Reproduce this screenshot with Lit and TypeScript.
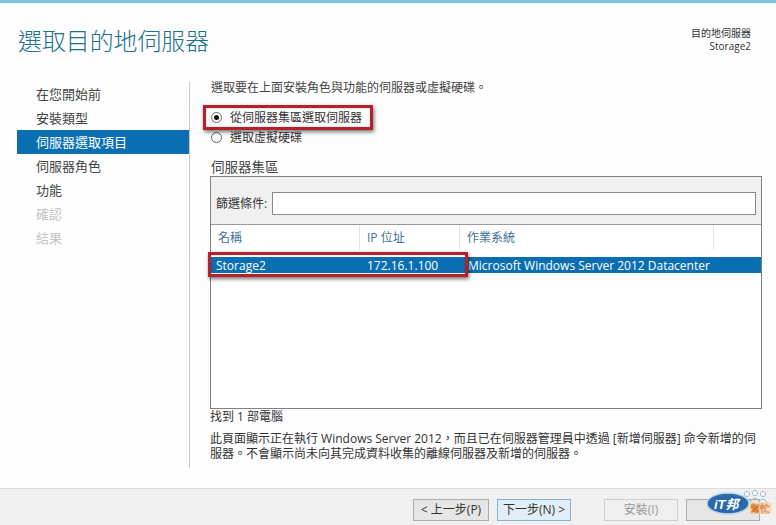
import { LitElement, html, css } from "lit";
import { customElement } from "lit/decorators.js";

@customElement("app-root")
export class AppRoot extends LitElement {
  static styles = css`
    :host {
      display: flex; flex-direction: column; position: relative; overflow: hidden;
      width: 776px; height: 525px; background: #fdfdfd; color: #333;
      font-family: "Open Sans", "Noto Sans CJK TC", sans-serif; font-size: 12px;
    }
    .topbar { height: 3px; background: #7cc5df; flex: none; }
    .header { height: 79px; flex: none; display: flex; justify-content: space-between; box-sizing: border-box; padding: 24px 25px 0 18px; }
    .title { font-size: 23.9px; line-height: 28px; color: #23708c; font-weight: 300; }
    .dest { text-align: right; font-size: 10px; line-height: 13px; color: #333; }
    .main { flex: 1; display: flex; min-height: 0; }
    .side { width: 172px; margin-left: 17px; height: 386px; flex: none; box-sizing: border-box; }
    .divider { width: 1px; height: 386px; background: #c8c8c8; flex: none; }
    .item { height: 24px; line-height: 24px; padding-left: 19px; font-size: 13px; color: #444; }
    .item.on { background: #0a6fb2; color: #fff; }
    .item.off { color: #c4c4c4; }
    .content { margin-left: 21px; width: 551px; flex: none; }
    .intro { line-height: 12px; height: 12px; color: #444; white-space: nowrap; }
    .radio { display: flex; align-items: center; height: 20px; gap: 8px; color: #333; }
    .radio.first { margin-top: 13px; }
    .dot { width: 9px; height: 9px; border: 1px solid #666; border-radius: 50%; background: #fff; display: flex; align-items: center; justify-content: center; }
    .dot.sel::after { content: ""; width: 5px; height: 5px; border-radius: 50%; background: #111; }
    .pool { margin-top: 12px; height: 16px; line-height: 16px; font-size: 13.5px; color: #444; }
    .box { margin-top: 1px; margin-left: -1px; height: 233px; border: 1px solid #808080; box-sizing: border-box; background: #fff; display: flex; flex-direction: column; }
    .filter { height: 48px; flex: none; background: #f0f0f0; border-bottom: 1px solid #9a9a9a; display: flex; align-items: flex-end; gap: 3px; padding: 0 5px 9px 5px; box-sizing: border-box; }
    .filter label { line-height: 23px; color: #333; white-space: nowrap; width: 53px; }
    .input { flex: 1; height: 23px; border: 1px solid #8a8a8a; background: #fff; box-sizing: border-box; }
    .cols { height: 25px; flex: none; display: grid; grid-template-columns: 149px 100px 254px 1fr; }
    .col { line-height: 25px; color: #3d7198; padding-left: 7px; border-right: 1px solid #e4e4e4; }
    .col:last-child { border-right: 0; }
    .row { margin-top: 7px; height: 16px; line-height: 17px; display: grid; grid-template-columns: 149px 100px 1fr; background: #0a6fb2; color: #fff; font-size: 12px; }
    .row span { padding-left: 5px; white-space: nowrap; }
    .row span:nth-child(2) { padding-left: 7px; }
    .row span:nth-child(3) { padding-left: 8px; }
    .found { margin-top: 1px; line-height: 14px; color: #333; margin-left: -1px; }
    .note { margin-top: 7px; margin-left: -1px; line-height: 15px; color: #333; white-space: nowrap; font-size: 12px; }
    .footer { height: 37px; flex: none; background: #f0f0f0; border-top: 1px solid #dcdcdc; box-sizing: border-box; display: flex; padding: 10px 16px 0 413px; }
    .btn { height: 22px; box-sizing: border-box; width: 76px; border: 1px solid #adadad; background: #e6e6e6; text-align: center; line-height: 20px; color: #333; }
    .btn.next { width: 74px; margin-left: 8px; background: #e3edf6; border-color: #7eb4da; }
    .btn.dis { width: 74px; margin-left: 33px; color: #9a9a9a; background: #efefef; border-color: #cfcfcf; }
    .btn.cancel { width: 74px; margin-left: 8px; }
    .mark { position: absolute; border: 3px solid #b5202a; box-sizing: border-box; box-shadow: 1px 2px 4px rgba(0,0,0,.55), inset 0 0 2px rgba(0,0,0,.25); }
    .mark.a { left: 203px; top: 105px; width: 170px; height: 25px; }
    .mark.b { left: 208px; top: 252px; width: 260px; height: 25px; }
    .logo { position: absolute; left: 706px; top: 488px; width: 70px; height: 34px; }
    .logo-text { font-family: "Liberation Sans", "Noto Sans CJK TC", sans-serif; font-weight: 700; font-style: italic; font-size: 13px; fill: #fff; }
    .logo-help { font-family: "Noto Sans CJK TC", sans-serif; font-weight: 700; font-size: 9.5px; fill: #fff; stroke: #d9762a; stroke-width: .6px; }
  `;

  render() {
    return html`
      <div class="topbar"></div>
      <div class="header">
        <div class="title">選取目的地伺服器</div>
        <div class="dest">目的地伺服器<br />Storage2</div>
      </div>
      <div class="main">
        <div class="side">
          <div class="item">在您開始前</div>
          <div class="item">安裝類型</div>
          <div class="item on">伺服器選取項目</div>
          <div class="item">伺服器角色</div>
          <div class="item">功能</div>
          <div class="item off">確認</div>
          <div class="item off">結果</div>
        </div>
        <div class="divider"></div>
        <div class="content">
          <div class="intro">選取要在上面安裝角色與功能的伺服器或虛擬硬碟。</div>
          <div class="radio first"><span class="dot sel"></span>從伺服器集區選取伺服器</div>
          <div class="radio"><span class="dot"></span>選取虛擬硬碟</div>
          <div class="pool">伺服器集區</div>
          <div class="box">
            <div class="filter"><label>篩選條件:</label><div class="input"></div></div>
            <div class="cols">
              <div class="col">名稱</div><div class="col">IP 位址</div><div class="col">作業系統</div><div class="col"></div>
            </div>
            <div class="row"><span>Storage2</span><span>172.16.1.100</span><span>Microsoft Windows Server 2012 Datacenter</span></div>
          </div>
          <div class="found">找到 1 部電腦</div>
          <div class="note">此頁面顯示正在執行 Windows Server 2012，而且已在伺服器管理員中透過 [新增伺服器] 命令新增的伺<br />服器。不會顯示尚未向其完成資料收集的離線伺服器及新增的伺服器。</div>
        </div>
      </div>
      <div class="footer">
        <div class="btn">&lt; 上一步(P)</div>
        <div class="btn next">下一步(N) &gt;</div>
        <div class="btn dis">安裝(I)</div>
        <div class="btn cancel"></div>
      </div>
      <div class="mark a"></div>
      <div class="mark b"></div>
      <svg class="logo" viewBox="0 0 70 34">
        <g fill="#fff" stroke="#9fbcd2" stroke-width="1">
          <circle cx="41" cy="6" r="2.6" /><circle cx="49" cy="5" r="2.6" /><circle cx="57" cy="6" r="2.6" />
          <path d="M37 14q4-6 8 0M45 13q4-6 8 0M53 14q4-6 8 0" fill="none" />
        </g>
        <rect x="42" y="14" width="24" height="12" rx="4" fill="#f6dcc0" />
        <text class="logo-help" x="44.5" y="24">幫忙</text>
        <ellipse cx="22" cy="15.5" rx="21" ry="10.5" fill="#2a6aa8" stroke="#bcd3e6" stroke-width="1.5" />
        <text class="logo-text" x="8" y="20.5">iT邦</text>
      </svg>
    `;
  }
}
